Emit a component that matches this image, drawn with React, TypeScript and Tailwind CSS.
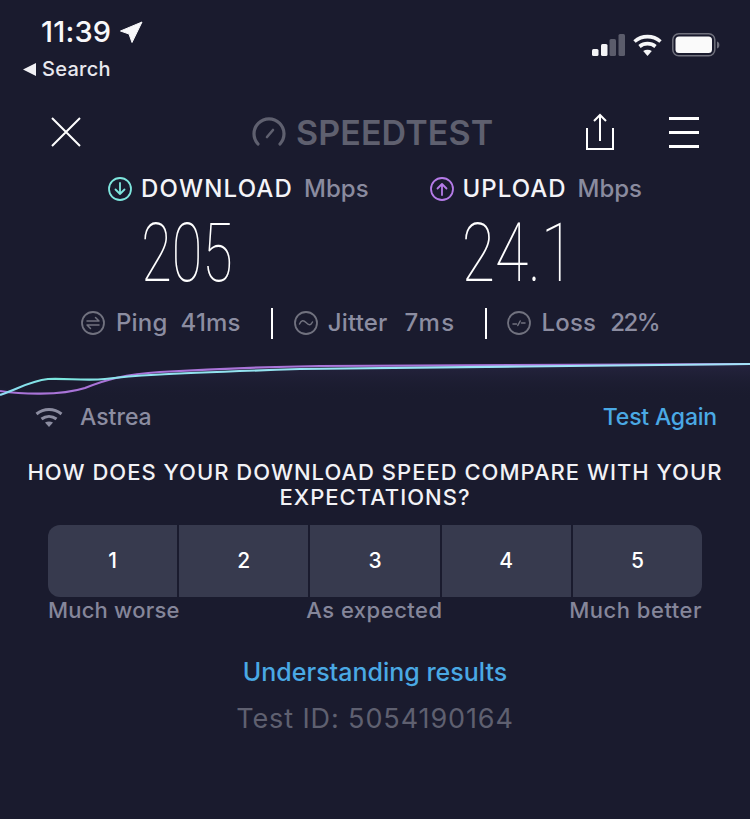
import { ReactNode } from "react";

const font = "font-['Inter','Liberation_Sans',sans-serif]";

function CircleIcon({ color, size = 26, children }: { color: string; size?: number; children: ReactNode }) {
  return (
    <svg width={size} height={size} viewBox="0 0 26 26" fill="none" stroke={color} strokeWidth="1.8" strokeLinecap="round" strokeLinejoin="round">
      <circle cx="13" cy="13" r="11" />
      {children}
    </svg>
  );
}

function StatusIcons() {
  return (
    <div className="flex items-center">
      <svg width="34" height="22" viewBox="0 0 34 22">
        <rect x="0" y="15" width="6.500" height="7" rx="1.500" fill="#f4f4f6" />
        <rect x="9" y="10" width="6.500" height="12" rx="1.500" fill="#f4f4f6" />
        <rect x="17.500" y="5" width="6.500" height="17" rx="1.500" fill="#5b5c6b" />
        <rect x="26.500" y="0" width="6.500" height="22" rx="1.500" fill="#5b5c6b" />
      </svg>
      <svg width="29" height="22" viewBox="0 0 29 22" fill="none" stroke="#f6f6f8" strokeWidth="3.600" className="ml-[7px]">
        <path d="M1.500 7.500C9 1 20 1 27.500 7.500" />
        <path d="M6.500 12.500c4.700-3.800 11.300-3.800 16 0" />
        <path d="M14.500 22l-4.300-5c2.500-1.700 6.100-1.700 8.600 0z" fill="#f6f6f8" stroke="none" />
      </svg>
      <svg width="48" height="24" viewBox="0 0 48 24" className="ml-[10px]">
        <rect x="0.800" y="0.800" width="42" height="22" rx="6" fill="none" stroke="#70717d" strokeWidth="1.500" />
        <rect x="3.500" y="3.500" width="36.500" height="16.500" rx="3.500" fill="#fafafa" />
        <path d="M45 8.500c1.600.5 2.400 1.800 2.400 3.500s-.8 3-2.400 3.500z" fill="#70717d" />
      </svg>
    </div>
  );
}

function MetricHead({ icon, label, className }: { icon: ReactNode; label: string; className: string }) {
  return (
    <div className="flex items-center text-[24px] font-medium">
      {icon}
      <span className={`ml-[8px] text-[#f4f4f8] ${className}`}>{label}</span>
      <span className="ml-[11px] text-[#8a8b9f]">Mbps</span>
    </div>
  );
}

function Stat({ icon, label, value, labelGap, valueGap }: { icon: ReactNode; label: string; value: string; labelGap: string; valueGap: string }) {
  return (
    <div className="flex items-center text-[24px] font-medium tracking-[0.2px] text-[#8c8da1]">
      {icon}
      <span className={labelGap}>{label}</span>
      <span className={valueGap}>{value}</span>
    </div>
  );
}

export default function App() {
  return (
    <div className={`w-[750px] h-[819px] overflow-hidden flex flex-col bg-[#1a1b2e] ${font}`}>
      {/* status bar */}
      <div className="h-[100px] flex justify-between">
        <div className="pl-[23px] pt-[14px]">
          <div className="flex items-center pl-[18px] h-[36px]">
            <span className="text-[29px] font-medium text-[#f8f8fa] tracking-[0.2px]">11:39</span>
            <svg width="24" height="24" viewBox="0 0 24 24" className="ml-[8px]">
              <path d="M23 2L1.500 11L10 14L13 22.500z" fill="#f8f8fa" stroke="#f8f8fa" strokeWidth="1" strokeLinejoin="round" />
            </svg>
          </div>
          <div className="flex items-center h-[30px] mt-[4px]">
            <svg width="13" height="13" viewBox="0 0 13 13">
              <path d="M13 0v13L0 6.500z" fill="#f0f0f4" />
            </svg>
            <span className="ml-[6px] text-[20px] font-medium tracking-[0.3px] text-[#e8e8ee]">Search</span>
          </div>
        </div>
        <div className="pr-[30px] pt-[33px]">
          <StatusIcons />
        </div>
      </div>

      {/* nav */}
      <div className="h-[64px] flex items-center pl-[50px] pr-[50px]">
        <svg width="32" height="32" viewBox="0 0 32 32" stroke="#fff" strokeWidth="2">
          <path d="M2 2l28 28M30 2L2 30" />
        </svg>
        <div className="ml-[169px] flex items-center w-[281px]">
          <svg width="36" height="30" viewBox="0 0 36 30" fill="none" stroke="#5f606f" strokeWidth="3.200" strokeLinecap="round">
            <path d="M7 27a15 15 0 1 1 22 0" />
            <path d="M16 20l6-7" strokeWidth="2.600" />
          </svg>
          <span className="ml-[9px] text-[34px] font-semibold tracking-[0.1px] text-[#5f606f]">SPEEDTEST</span>
        </div>
        <svg width="30" height="38" viewBox="0 0 30 38" fill="none" stroke="#fff" strokeWidth="2" className="ml-[53px]">
          <path d="M2 15V36H28V15" />
          <path d="M15 28V2M9 8L15 2l6 6" />
        </svg>
        <div className="ml-[54px] w-[30px] flex flex-col gap-[11px]">
          <div className="h-[3px] bg-white" />
          <div className="h-[3px] bg-white" />
          <div className="h-[3px] bg-white" />
        </div>
      </div>

      {/* download / upload heads */}
      <div className="h-[48px] pt-[2px] flex items-center pl-[107px]">
        <MetricHead
          label="DOWNLOAD"
          className="tracking-[1.200px]"
          icon={
            <CircleIcon color="#7ee6de">
              <path d="M13 7v11M8.500 13.500L13 18l4.500-4.500" />
            </CircleIcon>
          }
        />
        <div className="ml-[60px]">
          <MetricHead
            label="UPLOAD"
            className="tracking-[1px]"
            icon={
              <CircleIcon color="#b57be8">
                <path d="M13 19V8M8.500 12.500L13 8l4.500 4.500" />
              </CircleIcon>
            }
          />
        </div>
      </div>

      {/* values */}
      <div className="flex font-['Roboto',sans-serif] text-[82px] font-thin leading-none text-white">
        <div className="h-[82px] w-[120px] ml-[127px] flex items-center justify-center scale-x-[0.68]">205</div>
        <div className="h-[82px] w-[140px] ml-[201px] flex items-center justify-center scale-x-[0.74]">24.1</div>
      </div>

      {/* ping row */}
      <div className="h-[56px] pt-[2px] flex items-center pl-[80px]">
        <Stat
          label="Ping"
          value="41ms"
          labelGap="ml-[10px]"
          valueGap="ml-[13px]"
          icon={
            <CircleIcon color="#71727f">
              <path d="M7 11h12l-3.500-3.500M19 15H7l3.500 3.500" strokeWidth="1.500" />
            </CircleIcon>
          }
        />
        <div className="w-[2px] h-[31px] bg-white ml-[30px]" />
        <div className="ml-[20px]">
          <Stat
            label="Jitter"
            value="7ms"
            labelGap="ml-[9px]"
            valueGap="ml-[17px] tracking-[1.400px]"
            icon={
              <CircleIcon color="#71727f">
                <path d="M6.500 14c2-4 4-4 6.500-1.500S17.500 16 19.500 12" strokeWidth="1.500" />
              </CircleIcon>
            }
          />
        </div>
        <div className="w-[2px] h-[31px] bg-white ml-[29px]" />
        <div className="ml-[19px]">
          <Stat
            label="Loss"
            value="22%"
            labelGap="ml-[10px]"
            valueGap="ml-[14px] tracking-[-1.500px]"
            icon={
              <CircleIcon color="#71727f">
                <path d="M7 14H10.500M11.800 15.500L14.200 11M15.500 13H19" strokeWidth="1.500" />
              </CircleIcon>
            }
          />
        </div>
      </div>

      {/* chart */}
      <svg width="750" height="50" viewBox="0 0 750 50" fill="none" className="block">
        <defs>
          <linearGradient id="glow" x1="0" y1="0" x2="0" y2="1">
            <stop offset="0" stopColor="#3a3560" stopOpacity="0.35" />
            <stop offset="1" stopColor="#1a1b2e" stopOpacity="0" />
          </linearGradient>
          <linearGradient id="line" gradientUnits="userSpaceOnUse" x1="0" y1="0" x2="750" y2="0">
            <stop offset="0" stopColor="#8fdcf5" />
            <stop offset="0.08" stopColor="#79e6dc" />
            <stop offset="0.16" stopColor="#8fe3ee" />
            <stop offset="1" stopColor="#a3e4f8" />
          </linearGradient>
        </defs>
        <path d="M0 38C40 42 70 42 100 32C125 25 160 24 300 17C450 15 600 15 750 13V50H0z" fill="url(#glow)" />
        <path d="M0 41C20 44 60 46 85 38C105 30 125 24 160 22C210 19 260 17 320 16C450 15 600 15 750 14" stroke="#a974d8" strokeWidth="2.200" />
        <path d="M0 45C20 38 30 31 48 29C65 28 85 31 105 29C130 26 150 24 300 19C450 17 600 16 750 14" stroke="url(#line)" strokeWidth="2.200" />
      </svg>

      {/* network */}
      <div className="h-[34px] flex items-center justify-between pl-[35px] pr-[33px] text-[23px] font-medium">
        <div className="flex items-center">
          <svg width="28" height="20" viewBox="0 0 28 20" fill="none" stroke="#8c8da1" strokeWidth="3">
            <path d="M1.500 7C9 1 19 1 26.500 7" />
            <path d="M6.500 12c4.500-3.500 10.500-3.500 15 0" />
            <path d="M14 20l-4-4.500c2.400-1.500 5.600-1.500 8 0z" fill="#8c8da1" stroke="none" />
          </svg>
          <span className="ml-[17px] text-[#8c8da1]">Astrea</span>
        </div>
        <span className="tracking-[-0.2px] text-[#4aa9e4]">Test Again</span>
      </div>

      {/* question */}
      <div className="mt-[26px] text-center text-[22px] leading-[25px] font-medium text-[#f2f2f6] tracking-[1px] px-[20px]">
        HOW DOES YOUR DOWNLOAD SPEED COMPARE WITH YOUR EXPECTATIONS?
      </div>

      {/* rating */}
      <div className="mt-[15px] mx-[48px] h-[72px] grid grid-cols-5 gap-[2px] rounded-[12px] overflow-hidden">
        {[1, 2, 3, 4, 5].map((n) => (
          <div key={n} className="bg-[#373a4e] flex items-center justify-center text-[21px] font-medium text-white">
            {n}
          </div>
        ))}
      </div>
      <div className="h-[27px] mx-[48px] flex items-center justify-between text-[22px] font-medium tracking-[0.5px] text-[#85869a]">
        <span className="tracking-[0.2px]">Much worse</span>
        <span>As expected</span>
        <span>Much better</span>
      </div>

      <div className="mt-[30px] text-center text-[25px] font-medium text-[#4aa9e4]">Understanding results</div>
      <div className="mt-[7px] text-center text-[27px] text-[#5f6070] tracking-[0.9px]">Test ID: 5054190164</div>
    </div>
  );
}
